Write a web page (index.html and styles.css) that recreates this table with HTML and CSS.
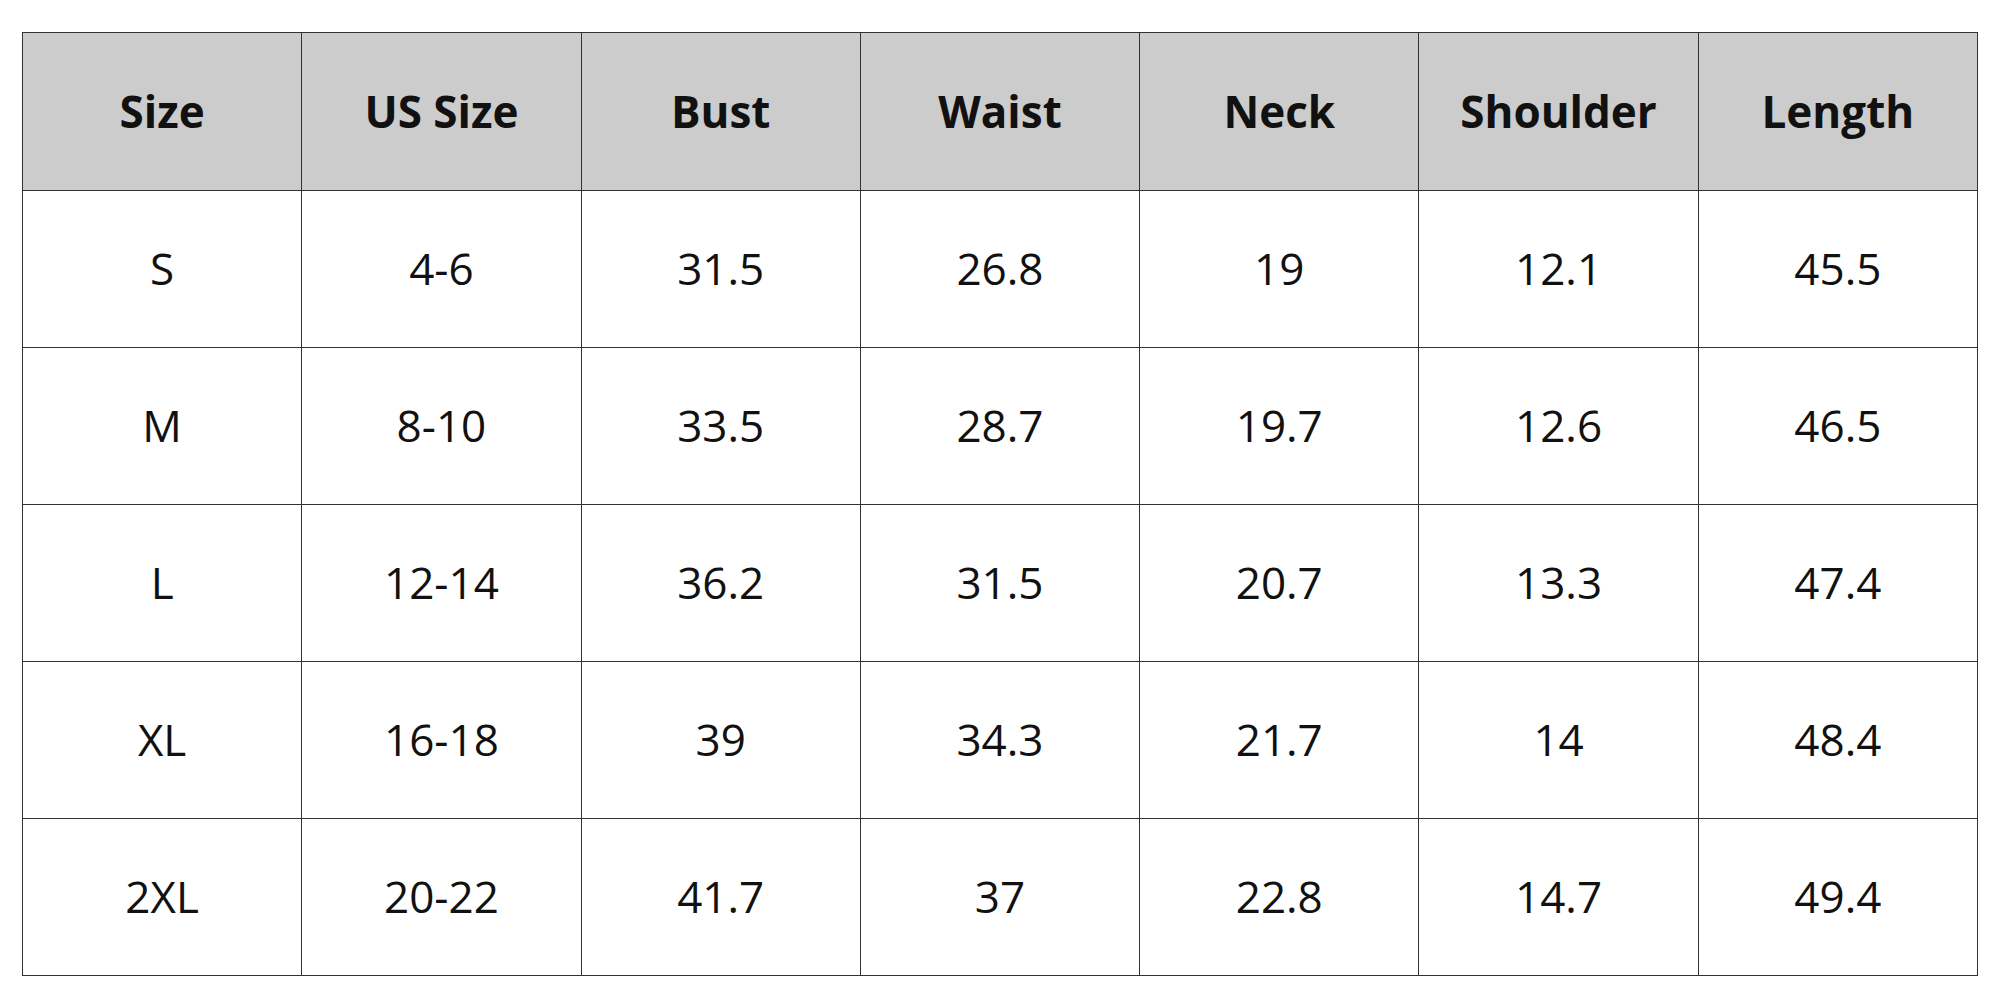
FILE: index.html
```html
<!DOCTYPE html>
<html lang="en">
<head>
<meta charset="utf-8">
<title>Size Chart</title>
<link rel="stylesheet" href="styles.css">
</head>
<body>
<div class="page">
<table class="chart">
<thead>
<tr><th>Size</th><th>US Size</th><th>Bust</th><th>Waist</th><th>Neck</th><th>Shoulder</th><th>Length</th></tr>
</thead>
<tbody>
<tr><td>S</td><td>4-6</td><td>31.5</td><td>26.8</td><td>19</td><td>12.1</td><td>45.5</td></tr>
<tr><td>M</td><td>8-10</td><td>33.5</td><td>28.7</td><td>19.7</td><td>12.6</td><td>46.5</td></tr>
<tr><td>L</td><td>12-14</td><td>36.2</td><td>31.5</td><td>20.7</td><td>13.3</td><td>47.4</td></tr>
<tr><td>XL</td><td>16-18</td><td>39</td><td>34.3</td><td>21.7</td><td>14</td><td>48.4</td></tr>
<tr><td>2XL</td><td>20-22</td><td>41.7</td><td>37</td><td>22.8</td><td>14.7</td><td>49.4</td></tr>
</tbody>
</table>
</div>
</body>
</html>
```
FILE: styles.css
```css
html, body {
  margin: 0;
  padding: 0;
  background: #ffffff;
}
.page {
  padding: 32px 22px 0 22px;
}
.chart {
  width: 1956px;
  table-layout: fixed;
  border-collapse: collapse;
  border: 1.5px solid #111111;
  font-family: "Open Sans", "Noto Sans", sans-serif;
  color: #111111;
}
.chart th,
.chart td {
  border: 1px solid #333333;
  text-align: center;
  vertical-align: middle;
  padding: 0 0 2px 0;
}
.chart th {
  height: 155px;
  background: #cccccc;
  font-size: 44px;
  font-weight: 700;
}
.chart td {
  height: 154px;
  font-size: 44px;
  font-weight: 400;
}
```
